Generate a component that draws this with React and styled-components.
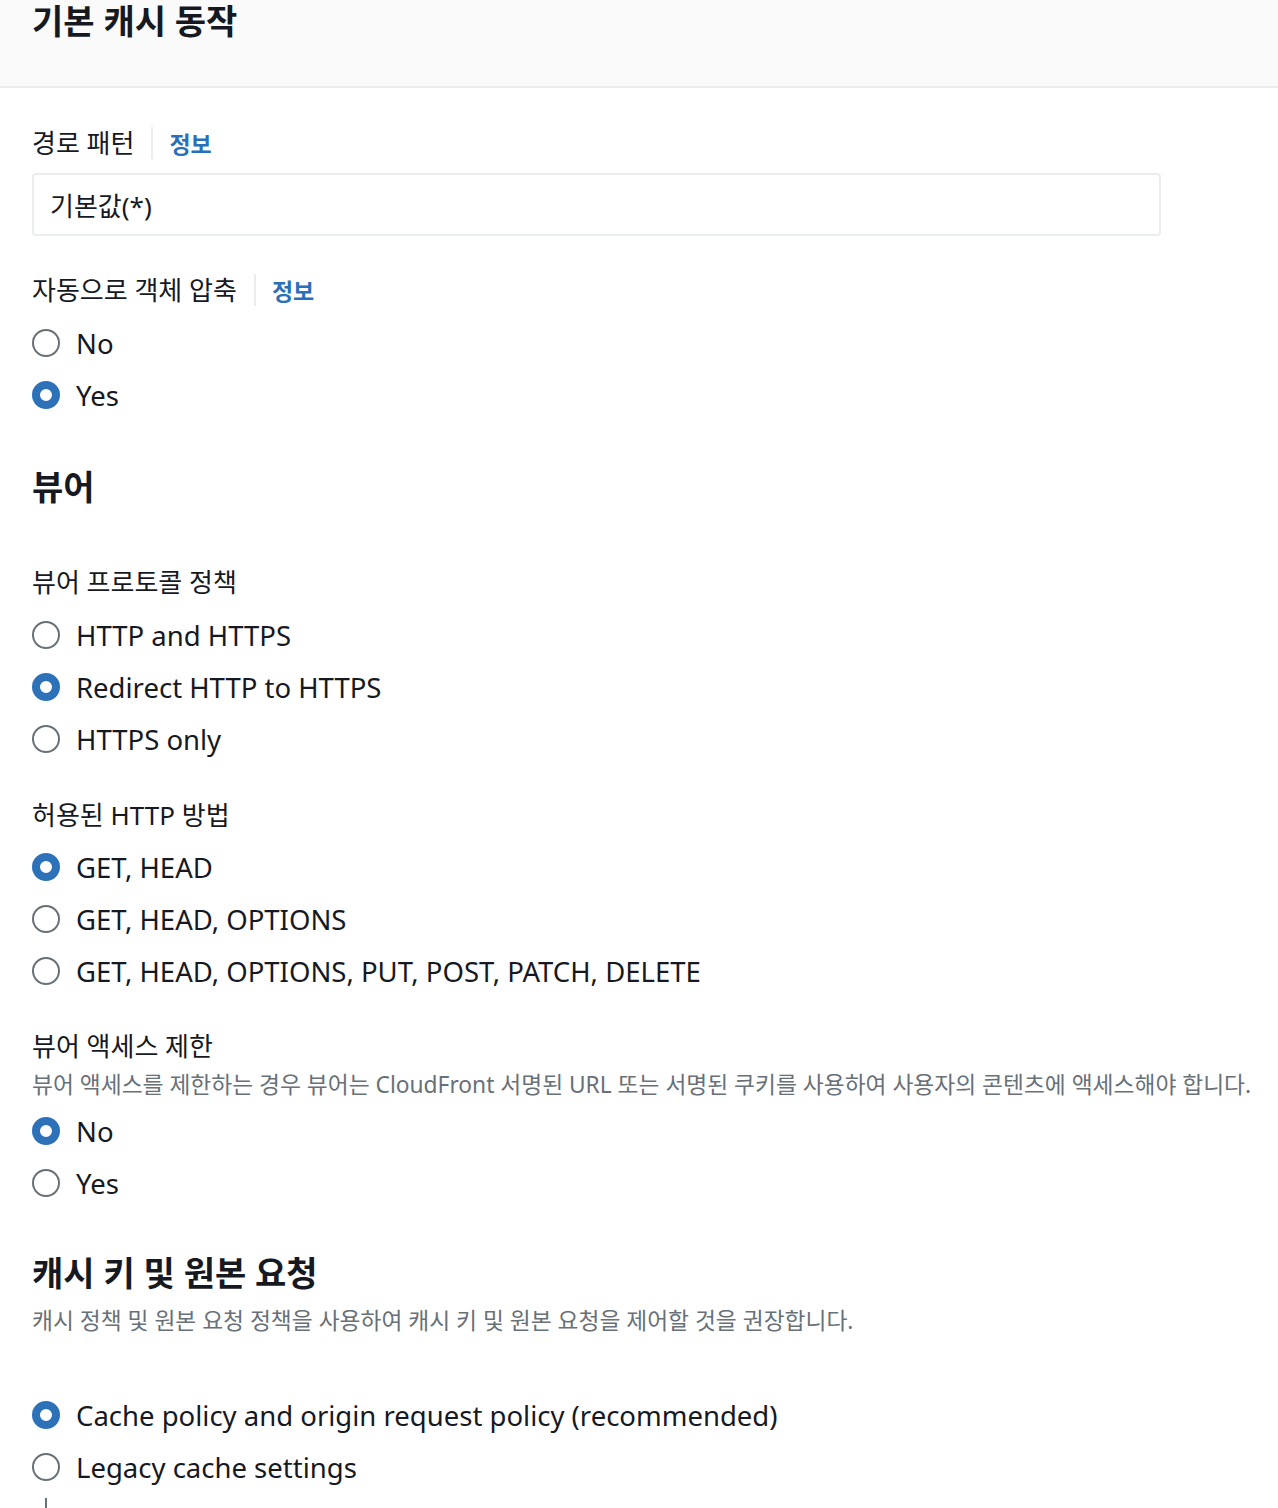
import React from 'react';
import styled, { createGlobalStyle } from 'styled-components';

const GlobalStyle = createGlobalStyle`
  body {
    margin: 0;
    background: #fff;
    font-family: "Noto Sans", "Noto Sans CJK KR", sans-serif;
    color: #16191f;
  }
`;

const Header = styled.div`
  height: 86px;
  background: #fafafa;
  border-bottom: 2px solid #eaeded;
  padding: 0 32px;
`;

const PageTitle = styled.h1`
  margin: 0;
  font-size: 34px;
  line-height: 42px;
  font-weight: 700;
  color: #16191f;
`;

const Body = styled.div`
  padding: 0 32px;
`;

const Field = styled.div`
  margin-top: ${(p) => p.$top || 32}px;
`;

const LabelRow = styled.div`
  display: flex;
  align-items: center;
  height: 36px;
`;

const Label = styled.span`
  font-size: 26px;
  line-height: 36px;
  color: #16191f;
`;

const Divider = styled.span`
  width: 2px;
  height: 32px;
  background: #eaeded;
  margin: 0 16px 0 17px;
`;

const InfoLink = styled.a`
  font-size: 23px;
  font-weight: 700;
  color: #2a6fba;
  text-decoration: none;
`;

const Input = styled.div`
  margin-top: 12px;
  width: 1129px;
  height: 63px;
  box-sizing: border-box;
  border: 2px solid #eaeded;
  border-radius: 4px;
  display: flex;
  align-items: center;
  padding-left: 16px;
  font-size: 26px;
  color: #16191f;
`;

const Description = styled.div`
  margin-top: ${(p) => p.$top || 5}px;
  font-size: 22.75px;
  line-height: 32px;
  color: #687078;
  white-space: nowrap;
`;

const RadioGroup = styled.div`
  margin-top: ${(p) => p.$top || 9}px;
  display: flex;
  flex-direction: column;
`;

const RadioRow = styled.label`
  display: flex;
  align-items: center;
  height: 52px;
  gap: 16px;
  font-size: 27.5px;
  color: #16191f;
`;

const Circle = styled.span`
  flex: none;
  width: 28px;
  height: 28px;
  box-sizing: border-box;
  border-radius: 50%;
  background: #fff;
  border: ${(p) => (p.$checked ? '8px solid #2d71b9' : '2px solid #687078')};
`;

const SectionTitle = styled.h2`
  margin: ${(p) => p.$top || 44}px 0 0;
  font-size: 34px;
  line-height: 44px;
  font-weight: 700;
  color: #16191f;
`;

const Tick = styled.div`
  margin: 5px 0 0 13px;
  width: 2px;
  height: 12px;
  background: #687078;
`;

const Radios = ({ options, selected, top }) => (
  <RadioGroup $top={top}>
    {options.map((opt) => (
      <RadioRow key={opt}>
        <Circle $checked={opt === selected} />
        {opt}
      </RadioRow>
    ))}
  </RadioGroup>
);

const FieldLabel = ({ children, info }) => (
  <LabelRow>
    <Label>{children}</Label>
    {info && (
      <>
        <Divider />
        <InfoLink href="#">정보</InfoLink>
      </>
    )}
  </LabelRow>
);

export default function App() {
  return (
    <>
      <GlobalStyle />
      <Header>
        <PageTitle>기본 캐시 동작</PageTitle>
      </Header>
      <Body>
        <Field $top={37}>
          <FieldLabel info>경로 패턴</FieldLabel>
          <Input>기본값(*)</Input>
        </Field>
        <Field $top={36}>
          <FieldLabel info>자동으로 객체 압축</FieldLabel>
          <Radios options={['No', 'Yes']} selected="Yes" />
        </Field>

        <SectionTitle $top={44}>뷰어</SectionTitle>

        <Field $top={55}>
          <FieldLabel>뷰어 프로토콜 정책</FieldLabel>
          <Radios
            options={['HTTP and HTTPS', 'Redirect HTTP to HTTPS', 'HTTPS only']}
            selected="Redirect HTTP to HTTPS"
          />
        </Field>
        <Field $top={32}>
          <FieldLabel>허용된 HTTP 방법</FieldLabel>
          <Radios
            options={[
              'GET, HEAD',
              'GET, HEAD, OPTIONS',
              'GET, HEAD, OPTIONS, PUT, POST, PATCH, DELETE',
            ]}
            selected="GET, HEAD"
            top={8}
          />
        </Field>
        <Field $top={31}>
          <FieldLabel>뷰어 액세스 제한</FieldLabel>
          <Description>
            뷰어 액세스를 제한하는 경우 뷰어는 CloudFront 서명된 URL 또는 서명된 쿠키를 사용하여 사용자의 콘텐츠에 액세스해야 합니다.
          </Description>
          <Radios options={['No', 'Yes']} selected="No" top={4} />
        </Field>

        <SectionTitle $top={42}>캐시 키 및 원본 요청</SectionTitle>
        <Description $top={10}>
          캐시 정책 및 원본 요청 정책을 사용하여 캐시 키 및 원본 요청을 제어할 것을 권장합니다.
        </Description>
        <Radios
          options={['Cache policy and origin request policy (recommended)', 'Legacy cache settings']}
          selected="Cache policy and origin request policy (recommended)"
          top={52}
        />
        <Tick />
      </Body>
    </>
  );
}
